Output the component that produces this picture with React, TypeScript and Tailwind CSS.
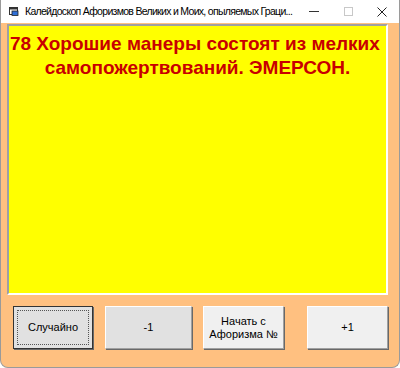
import React from 'react';

const btnBase =
    'h-[43px] flex items-center justify-center text-center text-[11px] leading-[13px] text-black border border-t-white border-l-white border-b-[#a0a0a0] border-r-[#a0a0a0] shadow-[1px_1px_0_#696969]';

export default function App() {
    return (
        <div className="w-[400px] h-[368px] flex flex-col bg-[#ffc080] border-x border-b border-[#9a9a9a] rounded-b-[8px] overflow-hidden font-['Liberation_Sans',sans-serif]">
            <div className="h-[23px] bg-white flex items-center shrink-0">
                <svg width="10" height="9" viewBox="0 0 10 9" className="ml-[8px] mr-[6px] shrink-0">
                    <rect x="0.5" y="0.5" width="8" height="7" fill="#fff" stroke="#333" />
                    <rect x="0.5" y="0.5" width="8" height="2" fill="#333" />
                    <rect x="3" y="4" width="6" height="4.5" fill="#2f6fd6" stroke="#222" strokeWidth="0.8" />
                </svg>
                <span className="shrink-0 whitespace-nowrap text-[10.5px] tracking-[-0.7px] text-black font-['Liberation_Sans',sans-serif]">
                    Калейдоскоп Афоризмов Великих и Моих, опыляемых Граци...
                </span>
                <div className="ml-auto flex items-center h-full shrink-0">
                    <div className="w-[34px] h-full flex items-center justify-center">
                        <div className="w-[10px] h-px bg-[#333]" />
                    </div>
                    <div className="w-[34px] h-full flex items-center justify-center">
                        <div className="w-[9px] h-[9px] border border-[#c8c8c8]" />
                    </div>
                    <div className="w-[34px] h-full flex items-center justify-center">
                        <svg width="10" height="10" viewBox="0 0 10 10">
                            <path d="M0.5 0.5L9.5 9.5M9.5 0.5L0.5 9.5" stroke="#222" strokeWidth="1" />
                        </svg>
                    </div>
                </div>
            </div>
            <div className="mt-[1px] ml-[6px] w-[381px] h-[271px] bg-[#ffff00] border-2 border-t-[#a0a0a0] border-l-[#a0a0a0] border-b-white border-r-white shrink-0">
                <p className="pt-[6px] text-center text-[#c80000] text-[19px] leading-[24px] font-bold whitespace-nowrap font-['Liberation_Sans',sans-serif]">
                    78 Хорошие манеры состоят из мелких&nbsp;
                    <br />
                    самопожертвований. ЭМЕРСОН.
                </p>
            </div>
            <div className="flex mt-[11px]">
                <button className={`${btnBase} ml-[12px] w-[80px] bg-[#e1e1e1] !border-[#333] p-[3px]`}>
                    <span className="w-full h-full flex items-center justify-center border border-dotted border-[#555]">Случайно</span>
                </button>
                <button className={`${btnBase} ml-[12px] w-[87px] bg-[#e1e1e1]`}>-1</button>
                <button className={`${btnBase} ml-[11px] w-[81px] bg-[#f0f0f0]`}>
                    Начать с<br />Афоризма №
                </button>
                <button className={`${btnBase} ml-[23px] w-[81px] bg-[#f0f0f0]`}>+1</button>
            </div>
        </div>
    );
}
